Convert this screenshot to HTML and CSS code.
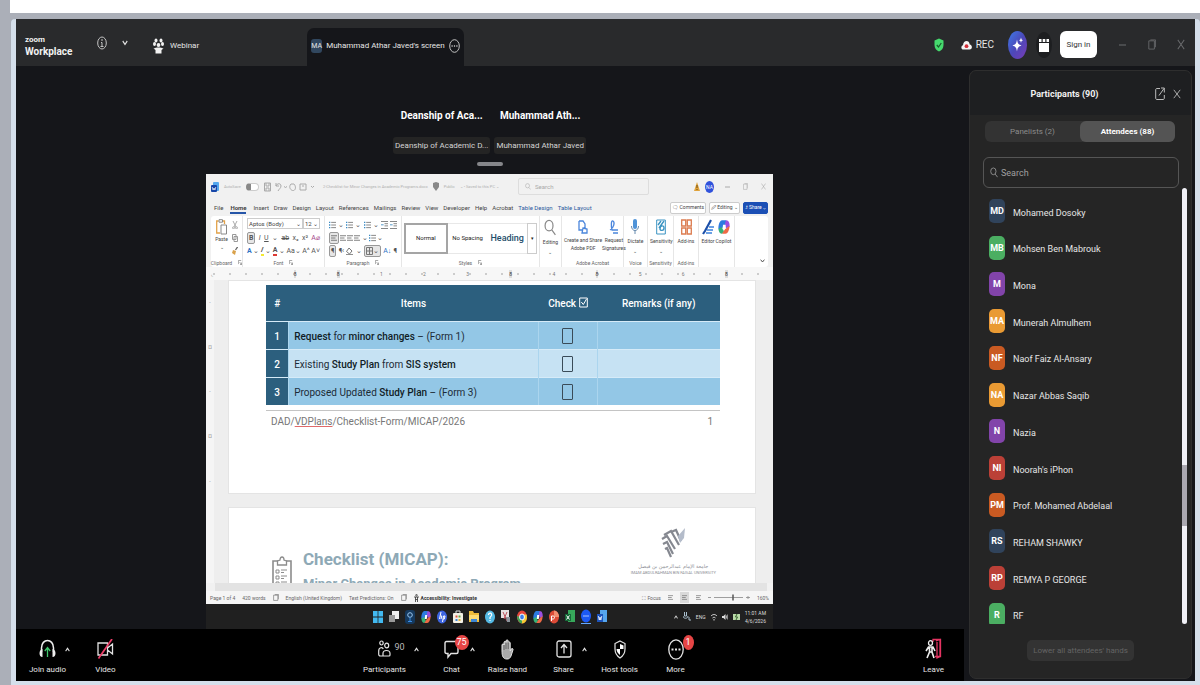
FILE: index.html
```
<!DOCTYPE html>
<html lang="en">
<head>
<meta charset="utf-8">
<title>Zoom Workplace</title>
<link rel="stylesheet" href="styles.css">
</head>
<body>
<svg class="defs" aria-hidden="true">
  <symbol id="up" viewBox="0 0 8 6" preserveAspectRatio="none"><path d="M1 5l3-3.5L7 5" fill="none" stroke="currentColor" stroke-width="1.6"/></symbol>
  <symbol id="down" viewBox="0 0 8 6" preserveAspectRatio="none"><path d="M1 1l3 3.5L7 1" fill="none" stroke="currentColor" stroke-width="1.4"/></symbol>
  <symbol id="cross" viewBox="0 0 10 12" preserveAspectRatio="none"><path d="M1 1l8 10M9 1L1 11" fill="none" stroke="currentColor" stroke-width="1.1"/></symbol>
  <symbol id="box" viewBox="0 0 10 12" preserveAspectRatio="none"><path d="M1 2h7v9H1zM3 1h6.500v8" fill="none" stroke="currentColor"/></symbol>
  <symbol id="search" viewBox="0 0 10 14" preserveAspectRatio="none"><path d="M7.500 5.500a3.300 4.300 0 1 1-6.600 0a3.300 4.300 0 1 1 6.600 0M6.500 9l3 4" fill="none" stroke="currentColor" stroke-width="1"/></symbol>
  <symbol id="lines" viewBox="0 0 8 9"><path d="M0 1.500h8M0 4.500h6M0 7.500h8" stroke="currentColor" fill="none"/></symbol>
  <symbol id="bullets" viewBox="0 0 8 9"><path d="M2.500 1.500H8M2.500 4.500H8M2.500 7.500H8" stroke="#777" fill="none"/><path d="M0 1.500h1.500M0 4.500h1.500M0 7.500h1.500" stroke="#3a8bc4" stroke-width="1.500"/></symbol>
  <symbol id="indent" viewBox="0 0 8 9"><path d="M0 .5h8M4 3h4M4 5.500h4M0 8.500h8" stroke="#777" fill="none"/><path d="M0 4.300h3" stroke="#3a8bc4"/></symbol>
  <symbol id="launch" viewBox="0 0 5 6"><path d="M.5 5V.5H4M2 2.500l2.500 3M4.500 3v2.500H2.500" stroke="#777" stroke-width=".8" fill="none"/></symbol>
  <symbol id="copilot" viewBox="0 0 12 14" preserveAspectRatio="none"><path d="M4 1h4l1.500 3L6 6 3 10 .5 9C0 5 2 1 4 1z" fill="#2c7be0"/><path d="M8 1c3 0 4 3 3.500 6L8 8 7 4z" fill="#9b4fe0"/><path d="M.5 8.500L4 7l2 4-2 2C2 13 .5 11 .5 8.500z" fill="#35b276"/><path d="M11.500 6c0 4-2 7-4 7H4l3-4z" fill="#ef6a45"/><path d="M5 5h2.500L7 9H4.500z" fill="#fff"/></symbol>
</svg>

<div class="topstrip"></div>
<div class="window">
  <header class="titlebar">
    <div class="brand"><span class="brand-small">zoom</span><span class="brand-big">Workplace</span></div>
    <button class="plain info" aria-label="Meeting information"><svg width="10" height="14" viewBox="0 0 10 14" preserveAspectRatio="none" fill="none" stroke="#c4c4c4"><ellipse cx="5" cy="7" rx="4.300" ry="6"/><path d="M5 3v2M4 6.500h1V10M3.500 10.500h3"/></svg></button>
    <button class="plain more-info" aria-label="More information"><svg width="6" height="6"><use href="#down"/></svg></button>
    <div class="webinar">
      <svg width="11" height="16" viewBox="0 0 11 16" fill="#f2f2f2"><ellipse cx="3" cy="2.500" rx="1.500" ry="2"/><ellipse cx="8" cy="2.500" rx="1.500" ry="2"/><ellipse cx="1.500" cy="6" rx="1.500" ry="2"/><ellipse cx="9.500" cy="6" rx="1.500" ry="2"/><circle cx="5.500" cy="7" r="1.900"/><path d="M.5 10.500C3 9 8 9 10.500 10.500L8.500 12v3.500h-6V12z"/></svg>
      <span>Webinar</span>
    </div>
    <div class="screen-tab">
      <span class="mini-avatar">MA</span><span>Muhammad Athar Javed's screen</span>
      <button class="plain" aria-label="Screen options"><svg width="11" height="14" viewBox="0 0 11 14" preserveAspectRatio="none" fill="none" stroke="#c4c4c4"><ellipse cx="5.500" cy="7" rx="4.800" ry="6.300"/><path d="M2.500 7h1.200M4.900 7h1.200M7.300 7h1.200" stroke-width="1.600"/></svg></button>
    </div>
    <div class="title-tools">
      <svg width="10" height="14" viewBox="0 0 10 14"><path d="M5 .5l4.500 2V7c0 3.500-2 5.500-4.500 6.500C2.500 12.500.5 10.500.5 7V2.500z" fill="#45d96d"/><path d="M2.800 7l1.700 2 2.800-4" fill="none" stroke="#185c2c" stroke-width="1.200"/></svg>
      <div class="rec"><svg width="11" height="10" viewBox="0 0 11 10"><path d="M2.500 9.500C-.3 9.500-.2 5.600 2 5.200 2.200.1 8.300-.6 8.700 4.500c3 .3 2.800 5 0 5z" fill="#f5f5f5"/><circle cx="5.500" cy="6.200" r="1.900" fill="#d3303a"/></svg><span>REC</span></div>
      <button class="plain" aria-label="AI Companion"><svg width="19" height="28" viewBox="0 0 19 28"><defs><linearGradient id="ai" x1="0" y1="0" x2="1" y2="1"><stop offset="0" stop-color="#3f7be8"/><stop offset=".5" stop-color="#4b48b9"/><stop offset="1" stop-color="#7a3bb5"/></linearGradient></defs><ellipse cx="9.500" cy="14" rx="9.500" ry="14" fill="url(#ai)"/><path d="M9 8.500c.6 4 1.500 5 4.500 6-3 1-3.900 2-4.500 6-.6-4-1.500-5-4.500-6 3-1 3.900-2 4.500-6zM13 6.500l.6 2 1.400.7-1.400.7-.6 2-.6-2-1.400-.7 1.400-.7z" fill="#fff"/></svg></button>
      <button class="plain cal" aria-label="Calendar"><svg width="10" height="14" viewBox="0 0 10 14" fill="#fff"><rect y="5" width="10" height="9"/><path d="M0 1h2.500v3H0zM3.700 1h2.600v3H3.700zM7.500 1H10v3H7.500z"/></svg></button>
      <button class="sign-in">Sign in</button>
      <div class="win-buttons">
        <button class="plain" aria-label="Minimize"><svg width="8" height="12" viewBox="0 0 8 12"><path d="M0 6h7" stroke="currentColor"/></svg></button>
        <button class="plain" aria-label="Restore"><svg width="8" height="11"><use href="#box"/></svg></button>
        <button class="plain" aria-label="Close"><svg width="8" height="11"><use href="#cross"/></svg></button>
      </div>
    </div>
  </header>

  <div class="content">
    <div class="left">
      <main class="stage">
        <div class="speakers">
          <div class="speaker"><strong>Deanship of Aca...</strong><span>Deanship of Academic D...</span></div>
          <div class="speaker"><strong>Muhammad Ath...</strong><span>Muhammad Athar Javed</span></div>
        </div>
        <div class="grip"></div>

        <section class="share" aria-label="Shared screen">
          <div class="w-title">
            <svg width="8" height="10" viewBox="0 0 8 10"><rect x="2" width="6" height="9" rx="1" fill="#55a8ee"/><rect y="3" width="6" height="7" rx="1" fill="#1746a8"/><path d="M1.200 5l.9 3L3 6l.9 2 .9-3" stroke="#fff" stroke-width=".7" fill="none"/></svg>
            <span class="faint saved">AutoSave</span><span class="switch"></span>
            <svg class="quick" width="50" height="10" viewBox="0 0 50 10" fill="none" stroke="#aaa"><path d="M.5 1h6v8h-6zM2 1v3h3V1M2 9V6h3v3M12 1v3h3M12 4c1-3 5-3 5 0 0 2-2 3-3 5M20 4.500l1.500 1L23 4.500M27 2c-3 3 0 7 2.500 6.500S32 4 30 2h-3M36 2h6v6h-6zM38 4h2M47 4l1.500 1.500L50 4"/></svg>
            <span class="faint doc-name">2-Checklist for Minor Changes in Academic Programs.docx</span>
            <svg width="6" height="9" viewBox="0 0 6 9"><path d="M0 1l3-1 3 1v4L3 9 0 5z" fill="#888"/></svg>
            <span class="faint saved">Public</span><span class="faint saved">⌄ • Saved to this PC ⌄</span>
            <label class="w-search"><svg width="6" height="7"><use href="#search"/></svg><input type="text" placeholder="Search" aria-label="Search document"></label>
            <svg width="6" height="9" viewBox="0 0 6 9"><path d="M3 0l3 9H0z" fill="#e0a33c"/><path d="M3 3v3M3 7v1" stroke="#6b4b12"/></svg>
            <span class="me">NA</span>
            <span class="w-win"><svg width="5" height="8" viewBox="0 0 5 8"><path d="M0 4h5" stroke="currentColor"/></svg><svg width="5" height="7"><use href="#box"/></svg><svg width="5" height="7"><use href="#cross"/></svg></span>
          </div>
          <nav class="w-tabs">
            <a href="#">File</a><a href="#" class="on">Home</a><a href="#">Insert</a><a href="#">Draw</a><a href="#">Design</a><a href="#">Layout</a><a href="#">References</a><a href="#">Mailings</a><a href="#">Review</a><a href="#">View</a><a href="#">Developer</a><a href="#">Help</a><a href="#">Acrobat</a><a href="#" class="blue">Table Design</a><a href="#" class="blue">Table Layout</a>
            <span class="w-actions"><button>🗨 Comments</button><button>🖉 Editing ⌄</button><button class="primary">⮥ Share ⌄</button></span>
          </nav>
          <div class="ribbon">
            <div class="group">
              <div class="tools clip">
                <div class="paste"><svg width="11" height="16" viewBox="0 0 11 16" fill="none"><path d="M2.500 2H.7v12H4M7 2h1.500v3" stroke="#e2a24a" stroke-width="1.300"/><path d="M3 .7h3.500v2.500H3z" stroke="#888"/><path d="M5 6h5.500v9H5z" fill="#fff" stroke="#888"/></svg><span>Paste</span><span>⌄</span></div>
                <div class="col"><svg width="6" height="8" viewBox="0 0 6 8" fill="none" stroke="#aaa"><path d="M1 0l3 6M5 0L2 6"/><circle cx="1.500" cy="6.800" r="1"/><circle cx="4.500" cy="6.800" r="1"/></svg><svg width="6" height="8" viewBox="0 0 6 8" fill="#fff" stroke="#999"><path d="M.5.5h3.500v5H.5zM2 2.500h3.500v5H2z"/></svg><svg width="6" height="8" viewBox="0 0 6 8"><path d="M5.500 0L3.500 3" stroke="#666" stroke-width="1.300"/><path d="M1 3l3 1-1 4-3-2z" fill="#d9a14a"/></svg></div>
              </div>
              <p>Clipboard <svg width="4" height="5"><use href="#launch"/></svg></p>
            </div>
            <div class="group">
              <div class="tools rows">
                <div class="fields"><span class="field wide">Aptos (Body) <i>⌄</i></span><span class="field">12 <i>⌄</i></span></div>
                <div class="row"><b class="pressed">B</b><em>I</em><u>U</u><span>⌄</span><s>ab</s><span>x₂</span><span>x²</span><span class="pink">A⌀</span></div>
                <div class="row"><b class="fx">A</b><span>⌄</span><b class="hl">∕</b><span>⌄</span><b class="fc">A</b><span>⌄</span><span>Aa⌄</span><span>A^</span><span>A˅</span></div>
              </div>
              <p>Font <svg width="4" height="5"><use href="#launch"/></svg></p>
            </div>
            <div class="group">
              <div class="tools rows">
                <div class="row"><svg width="7" height="8"><use href="#bullets"/></svg><span>⌄</span><svg width="7" height="8"><use href="#bullets"/></svg><span>⌄</span><svg width="7" height="8"><use href="#bullets"/></svg><span>⌄</span><svg width="7" height="8"><use href="#indent"/></svg><svg width="7" height="8"><use href="#indent"/></svg></div>
                <div class="row short"><span class="pressed"><svg width="6" height="8"><use href="#lines"/></svg></span><svg width="6" height="8"><use href="#lines"/></svg><svg width="6" height="8"><use href="#lines"/></svg><svg width="6" height="8"><use href="#lines"/></svg><span>⌄</span><svg width="7" height="8"><use href="#bullets"/></svg><span>⌄</span></div>
                <div class="row"><span class="pressed">¶</span><span>¶‹</span><svg width="7" height="8" viewBox="0 0 7 8" fill="none" stroke="#777"><path d="M3 1L.5 4.500 3.500 7 6 4zM0 7.700h7"/></svg><span>⌄</span><span class="pressed"><svg width="7" height="8" viewBox="0 0 7 8" fill="none" stroke="#777"><path d="M.5.500h6v7h-6zM3.500.500v7M.5 4h6"/></svg>⌄</span><span class="bluet">A↓</span><b>¶</b></div>
              </div>
              <p>Paragraph <svg width="4" height="5"><use href="#launch"/></svg></p>
            </div>
            <div class="group">
              <div class="tools styles"><span class="style sel">Normal</span><span class="style">No Spacing</span><span class="style head">Heading</span><span class="style arrow">▾</span></div>
              <p>Styles <svg width="4" height="5"><use href="#launch"/></svg></p>
            </div>
            <div class="group">
              <div class="tools big"><div><svg class="glass" width="12" height="17"><use href="#search"/></svg><span>Editing</span><span>⌄</span></div></div>
            </div>
            <div class="group">
              <div class="tools big"><div><svg width="10" height="15" viewBox="0 0 10 15" fill="none" stroke="#4b86dc"><path d="M1 2h4l2 3v4M1 2v9h3M5 9l4 1v4H4z" stroke-width="1.300"/></svg><span>Create and Share<br>Adobe PDF</span></div><div><svg width="10" height="15" viewBox="0 0 10 15" fill="none" stroke="#4b86dc"><path d="M1 11c4-2 5-8 3-9s-2 5-1 9h6M4 14h5" stroke-width="1.300"/></svg><span>Request<br>Signatures</span></div></div>
              <p>Adobe Acrobat</p>
            </div>
            <div class="group">
              <div class="tools big"><div><svg width="8" height="16" viewBox="0 0 8 16"><rect x="2" width="4" height="10" rx="2" fill="#4e93d8"/><path d="M.5 7c0 6 7 6 7 0M4 11.500V15" fill="none" stroke="#6589ad"/></svg><span>Dictate</span><span>⌄</span></div></div>
              <p>Voice</p>
            </div>
            <div class="group">
              <div class="tools big"><div><svg width="10" height="16" viewBox="0 0 10 16" fill="none" stroke="#3a93c2"><path d="M.7 1h8.600v14H.7z"/><path d="M2 6l3-4M3 9l5-7M4 10c0-4 4-4 4-1s-4 3-4 1" stroke-width="1.400"/></svg><span>Sensitivity</span><span>⌄</span></div></div>
              <p>Sensitivity</p>
            </div>
            <div class="group">
              <div class="tools big"><div><svg width="11" height="16" viewBox="0 0 11 16" fill="none" stroke="#dc7c50" stroke-width="1.300"><path d="M.7 1h4v6h-4zM6.300 1h4v6h-4zM.7 9h4v6h-4zM6.300 9h4v6h-4z"/></svg><span>Add-ins</span></div></div>
              <p>Add-ins</p>
            </div>
            <div class="group">
              <div class="tools big"><div><svg width="12" height="16" viewBox="0 0 12 16" fill="none"><path d="M9 1L3 12l-2 3" stroke="#1c4fa8" stroke-width="2.200"/><path d="M7 8h5M5 11h6M4 14h6" stroke="#3d83dd" stroke-width="1.500"/></svg><span>Editor</span></div><div><svg width="12" height="16"><use href="#copilot"/></svg><span>Copilot</span></div></div>
            </div>
            <div class="group last"><svg width="5" height="4"><use href="#down"/></svg></div>
          </div>
          <div class="ruler"><span>⌞</span><span></span><span class="mark">8</span><span class="mark">8</span><span>1</span><span>2</span><span>3</span><span class="mark">8</span><span>4</span><span class="mark">8</span><span>5</span><span>6</span><span class="mark">8</span><span></span></div>
          <div class="doc">
            <div class="vruler"><span>-</span><span>¤</span><span>-</span><span>¤</span><span>-</span></div>
            <div class="pages">
              <article class="page first">
                <table>
                  <colgroup><col class="c-num"><col class="c-item"><col class="c-check"><col></colgroup>
                  <thead><tr><th>#</th><th>Items</th><th>Check <svg width="9" height="11" viewBox="0 0 9 11" fill="none" stroke="#fff"><path d="M.7 1h7.600v9H.7zM2.300 5l2 2.500L7.500 2"/></svg></th><th>Remarks (if any)</th></tr></thead>
                  <tbody>
                    <tr><th>1</th><td><b>Request</b> for <b>minor changes</b> – (Form 1)</td><td class="ctr"><input type="checkbox" aria-label="Request for minor changes"></td><td></td></tr>
                    <tr><th>2</th><td>Existing <b>Study Plan</b> from <b>SIS system</b></td><td class="ctr"><input type="checkbox" aria-label="Existing Study Plan"></td><td></td></tr>
                    <tr><th>3</th><td>Proposed Updated <b>Study Plan</b> – (Form 3)</td><td class="ctr"><input type="checkbox" aria-label="Proposed Updated Study Plan"></td><td></td></tr>
                  </tbody>
                </table>
                <footer class="page-foot"><span>DAD/<u>VDPlans</u>/Checklist-Form/MICAP/2026</span><span>1</span></footer>
              </article>
              <article class="page second">
                <svg class="board" width="20" height="34" viewBox="0 0 20 34" fill="none" stroke="#8c8c8c"><path d="M6 5H1v29M14 5h5v29" stroke-width="1.600"/><path d="M5.500 9V5l2.500-1c0-4 4-4 4 0l2.500 1v4z" stroke-width="1.300"/><path d="M4 14h3v3H4zM4 20h3v3H4zM4 26h3v3H4zM9 14h6M9 16.500h3M9 20h6M9 22.500h3M9 26h6M9 28.500h3"/></svg>
                <div class="headings"><h1>Checklist (MICAP):</h1><h2>Minor Changes in Academic Program</h2></div>
                <div class="uni">
                  <svg width="25" height="30" viewBox="0 0 25 30" fill="none" stroke="#858890"><path d="M1 11l5-3 8 13M2 16l4-2 6 12M4 21l2-1 4 9M3 7l7-4 8 14M10 4l5-2 5 11" stroke-width="2.200"/><path d="M24 0l-1 10-4 5-2-7z" fill="#b4bcca" stroke="none"/></svg>
                  <span class="ar" lang="ar" dir="rtl">جامعة الإمام عبدالرحمن بن فيصل</span>
                  <span class="en">IMAM ABDULRAHMAN BIN FAISAL UNIVERSITY</span>
                </div>
              </article>
            </div>
          </div>
          <div class="hscroll"></div>
          <div class="status">
            <span>Page 1 of 4</span><span>420 words</span><svg width="6" height="7"><use href="#box"/></svg><span>English (United Kingdom)</span><span>Text Predictions: On</span><svg width="6" height="7"><use href="#box"/></svg><svg width="5" height="8" viewBox="0 0 5 8" fill="none" stroke="#333" stroke-width=".8"><circle cx="2.500" cy="1.200" r=".8"/><path d="M0 3h5M1.500 3v5M3.500 3v5M1.500 5.500h2"/></svg><b>Accessibility: Investigate</b>
            <span class="right">⛶ Focus</span><svg width="5" height="7"><use href="#lines"/></svg><span class="view-on"><svg width="5" height="7"><use href="#lines"/></svg></span><svg width="5" height="7"><use href="#lines"/></svg><svg width="42" height="7" viewBox="0 0 42 7"><path d="M0 3.500h3M6 3.500h29M38 3.500h4M40 2v3" stroke="#888" stroke-width=".8"/><path d="M25 .5v6" stroke="#555" stroke-width="1.500"/></svg><span>160%</span>
          </div>
          <div class="taskbar">
            <div class="apps">
              <svg width="10" height="14" viewBox="0 0 10 14"><path d="M0 1h4.600v5.600H0zM5.400 1H10v5.600H5.400zM0 7.400h4.600V13H0zM5.400 7.400H10V13H5.400z" fill="#42b9f0"/></svg>
              <svg width="10" height="14" viewBox="0 0 10 14"><rect x="3" y="1" width="7" height="8" fill="#eee"/><rect y="5" width="6" height="7" fill="#999"/></svg>
              <svg width="10" height="14" viewBox="0 0 10 14"><rect width="10" height="14" rx="3" fill="#15395e"/><circle cx="5" cy="5" r="2.300" fill="none" stroke="#9cc8ef"/><path d="M5 7.500V11M3 11.500h4" stroke="#3a8be2"/></svg>
              <svg width="10" height="14"><use href="#copilot"/></svg>
              <svg width="10" height="14" viewBox="0 0 10 14"><ellipse cx="5" cy="7" rx="5" ry="6.500" fill="#3c64e0"/><path d="M4 2L2.500 9M3.500 6h1.300L4 9M6.500 6L5.500 12M6.500 6H8l-.7 3H6" stroke="#fff" fill="none"/></svg>
              <svg width="10" height="14" viewBox="0 0 10 14"><rect y="3" width="10" height="10" rx="1" fill="#f4f1e6"/><path d="M3 3V1h4v2" stroke="#ddd" fill="none"/><path d="M2.500 5.500h2v2h-2z" fill="#e0533d"/><path d="M5.500 5.500h2v2h-2z" fill="#67a845"/><path d="M2.500 9h2v2h-2z" fill="#3c82d8"/><path d="M5.500 9h2v2h-2z" fill="#e7b52f"/></svg>
              <svg width="10" height="14" viewBox="0 0 10 14"><path d="M0 1h4l1 2h5v9H0z" fill="#efbc3a"/><path d="M0 5h10v5H0z" fill="#ffdc73"/><path d="M2 9h6v3H2z" fill="#3c86d5"/></svg>
              <svg width="10" height="14" viewBox="0 0 10 14"><ellipse cx="5" cy="7" rx="5" ry="6.500" fill="#54b9e3"/><path d="M3.500 5c0-3 4-2 3 .5L5 7.500V9M5 10v1" stroke="#fff" stroke-width="1.200" fill="none"/></svg>
              <svg width="10" height="14" viewBox="0 0 10 14"><rect width="8" height="8" fill="#e8e2e2"/><path d="M2 2l4 9M6 2L3 9" stroke="#bd515b"/><path d="M5 7h4v5H6z" fill="#8c949c"/></svg>
              <svg width="10" height="14" viewBox="0 0 10 14"><ellipse cx="5" cy="7" rx="5" ry="6.500" fill="#e9463b"/><path d="M0 6c0 4 2 7 5 7.500L6 8z" fill="#42a354"/><path d="M5 13.500c4 0 6-5 4.500-9H5z" fill="#f5c933"/><ellipse cx="5" cy="7" rx="2.400" ry="3" fill="#3d7fe8" stroke="#fff"/></svg>
              <svg width="10" height="14"><use href="#copilot"/></svg>
              <svg width="10" height="14" viewBox="0 0 10 14"><ellipse cx="5" cy="7" rx="5" ry="6.500" fill="#dc4a36"/><path d="M5 .5c3 0 5 3 5 6.500H5z" fill="#f28d70"/><path d="M2.500 11V6H4c2 0 2 3 0 3H2.500" stroke="#fff" fill="none"/></svg>
              <svg width="10" height="14" viewBox="0 0 10 14"><path d="M3 0h7v12H3z" fill="#37a85a"/><path d="M0 4h6v7H0z" fill="#176a39"/><path d="M1.500 5.500l3 4M4.500 5.500l-3 4" stroke="#fff"/></svg>
              <span class="app-on"><svg width="10" height="14" viewBox="0 0 10 14"><ellipse cx="5" cy="7" rx="5" ry="6.500" fill="#1c59f5"/><path d="M2 7h6" stroke="#a9c3ff"/></svg></span>
              <svg width="10" height="14" viewBox="0 0 10 14"><path d="M3 0h7v12H3z" fill="#56a6ee"/><path d="M0 4h6v8H0z" fill="#1d53ba"/><path d="M1.300 6l1 4L3 7l.8 3 1-4" stroke="#fff" stroke-width=".8" fill="none"/></svg>
            </div>
            <div class="tray"><svg width="4" height="4"><use href="#up"/></svg><svg width="8" height="9" viewBox="0 0 8 9" fill="none" stroke="#aac0cf"><path d="M1.500 0v4h2V0M0 4c0 3 5 3 5 0M6 5v3h2"/></svg><span>ENG</span><svg width="6" height="8" viewBox="0 0 6 8" fill="none" stroke="#ddd"><path d="M0 3c2-2 4-2 6 0M1.500 5c1-1 2-1 3 0M3 6v1.500"/></svg><svg width="6" height="8" viewBox="0 0 6 8"><path d="M0 3h1.500L3.500 1v6l-2-2H0z" fill="#ddd"/><path d="M4.500 2.500v3M5.700 1.500v5" stroke="#ddd" stroke-width=".7"/></svg><svg width="7" height="8" viewBox="0 0 7 8"><rect y="1" width="7" height="6" fill="#b8d9a8"/><path d="M4 1L2.500 4H4.500L3 7" stroke="#35622a" fill="none"/></svg><span class="clock">11:01 AM<br>4/6/2026</span></div>
          </div>
        </section>
      </main>

      <footer class="controls">
        <div class="side">
          <button class="tool"><svg width="17" height="20" viewBox="0 0 17 20" fill="none"><path d="M2.500 13V9c0-10 12-10 12 0v4" stroke="#eee" stroke-width="1.500"/><path d="M3.500 10v8C-.5 18-.5 10.500 3.500 10zM13.500 10v8c4 0 4-7.500 0-8z" fill="#eee"/><path d="M8.500 18V9M5.800 12L8.500 8.500l2.700 3.500" stroke="#3fc66c" stroke-width="1.300"/></svg><span>Join audio</span></button>
          <button class="caret near" aria-label="Audio options"><svg width="5" height="5"><use href="#up"/></svg></button>
          <button class="tool video"><svg width="17" height="20" viewBox="0 0 17 20" fill="none"><path d="M1 4h9.500v12H1zM10.500 9l5-4v10l-5-4" stroke="#e4e4e4" stroke-width="1.300"/><path d="M15 0L1.500 19.500" stroke="#ef3f6a" stroke-width="1.700"/></svg><span>Video</span></button>
        </div>
        <div class="middle">
          <button class="tool parts"><svg width="13" height="18" viewBox="0 0 13 18" fill="none" stroke="#e4e4e4" stroke-width="1.200"><ellipse cx="3.500" cy="3" rx="1.700" ry="2"/><ellipse cx="8.700" cy="5.500" rx="2" ry="2.300"/><path d="M4.500 16H2.500C1 16 .7 15 .7 14v-3c0-4 4-4 4.500-2M5 16v-2.500c0-4 7-4 7 0V15c0 .7-.3 1-1 1z"/></svg><i class="count">90</i><span>Participants</span></button>
          <button class="caret apart" aria-label="Participant options"><svg width="5" height="5"><use href="#up"/></svg></button>
          <button class="tool"><svg width="15" height="20" viewBox="0 0 15 20" fill="none" stroke="#e4e4e4" stroke-width="1.400"><path d="M2.500 2.500h10c1 0 1.500.7 1.500 1.500v9c0 1-.5 1.500-1.500 1.500H7L4 18v-3.500H2.500C1.500 14.500 1 14 1 13V4c0-.8.5-1.500 1.500-1.500z"/></svg><i class="badge">75</i><span>Chat</span></button>
          <button class="caret" aria-label="Chat options"><svg width="5" height="5"><use href="#up"/></svg></button>
          <button class="tool"><svg width="13" height="21" viewBox="0 0 13 21" fill="#aaa" stroke="#e4e4e4"><path d="M1 12V6c0-1.500 2-1.500 2 0V3.500c0-1.500 2-1.500 2 0V2c0-1.500 2.200-1.500 2.200 0v2c0-1.500 2-1.500 2 0v8l1-2c.8-1 2.300-.5 1.800.8L10 17c-1 2.300-2 3-4 3-4 0-5-3-5-8z"/><path d="M3 6v5M5 3.500V10M7.200 3v7" stroke="#333" stroke-width=".6"/></svg><span>Raise hand</span></button>
          <button class="tool"><svg width="16" height="18" viewBox="0 0 16 18" fill="none" stroke="#e4e4e4" stroke-width="1.300"><rect x="1" y="1" width="14" height="16" rx="2"/><path d="M8 13.500V5M5 8l3-3.500L11 8"/></svg><span>Share</span></button>
          <button class="caret" aria-label="Share options"><svg width="5" height="5"><use href="#up"/></svg></button>
          <button class="tool"><svg width="12" height="19" viewBox="0 0 12 19"><path d="M6 1l5 2.500V9c0 4.500-2 7-5 9-3-2-5-4.500-5-9V3.500z" fill="none" stroke="#e4e4e4" stroke-width="1.200"/><path d="M6 4v5h3.500V5.500zM6 9v6C4 13.500 2.700 12 2.500 9z" fill="#fff"/></svg><span>Host tools</span></button>
          <button class="tool"><svg width="16" height="21" viewBox="0 0 16 21" fill="none" stroke="#e4e4e4"><ellipse cx="8" cy="10.500" rx="7.200" ry="9.700" stroke-width="1.300"/><path d="M3.500 10.500h2M7 10.500h2M10.500 10.500h2" stroke-width="2"/></svg><i class="badge one">1</i><span>More</span></button>
        </div>
        <button class="tool leave"><svg width="17" height="22" viewBox="0 0 17 22" fill="none"><path d="M8 4V1.500h7.500v17H10M11 3l4-1.500v17l-3 1.500V4" stroke="#e53462" stroke-width="1.300"/><ellipse cx="5.500" cy="5" rx="2" ry="2.300" stroke="#eee" stroke-width="1.300"/><path d="M3 9h5l2 4M3.500 9L1 13M4.500 9v5L2 20M7 9v5l2 6M4.500 14H7" stroke="#eee" stroke-width="1.600"/></svg><span>Leave</span></button>
      </footer>
    </div>

    <aside class="panel">
      <header class="panel-head"><h2>Participants (90)</h2><span class="panel-icons"><button class="plain" aria-label="Pop out"><svg width="10" height="14" viewBox="0 0 10 14" fill="none" stroke="#bbb"><path d="M5 1.500H2C1 1.500.7 2 .7 3v8c0 1 .3 1.500 1.300 1.500h6c1 0 1.300-.5 1.300-1.500V8M6 1h3.300v4.500M9 1.500L4 8.500"/></svg></button><button class="plain" aria-label="Close panel"><svg width="8" height="10"><use href="#cross"/></svg></button></span></header>
      <div class="switcher"><button>Panelists (2)</button><button class="active">Attendees (88)</button></div>
      <label class="find"><svg width="8" height="11"><use href="#search"/></svg><input type="text" placeholder="Search" aria-label="Search participants"></label>
      <div class="list">
        <ul>
          <li><span class="av navy">MD</span><span>Mohamed Dosoky</span></li>
          <li><span class="av green">MB</span><span>Mohsen Ben Mabrouk</span></li>
          <li><span class="av purple">M</span><span>Mona</span></li>
          <li><span class="av amber">MA</span><span>Munerah Almulhem</span></li>
          <li><span class="av orange">NF</span><span>Naof Faiz Al-Ansary</span></li>
          <li><span class="av amber">NA</span><span>Nazar Abbas Saqib</span></li>
          <li><span class="av purple">N</span><span>Nazia</span></li>
          <li><span class="av red">NI</span><span>Noorah's iPhon</span></li>
          <li><span class="av orange">PM</span><span>Prof. Mohamed Abdelaal</span></li>
          <li><span class="av navy">RS</span><span>REHAM SHAWKY</span></li>
          <li><span class="av red">RP</span><span>REMYA P GEORGE</span></li>
          <li><span class="av green">R</span><span>RF</span></li>
        </ul>
        <div class="track"><div class="thumb"></div></div>
      </div>
      <button class="lower" disabled>Lower all attendees' hands</button>
    </aside>
  </div>
</div>
</body>
</html>
```
FILE: styles.css
```
* { box-sizing: border-box; }
body {
  margin: 0; height: 100vh; display: flex; flex-direction: column;
  background: #abafb8; padding-left: 10px; overflow: hidden;
  font-family: Roboto, "Open Sans", sans-serif;
  font-size: 8px; line-height: 12px; color: #e6e6e6;
}
button, input { font: inherit; color: inherit; }
button { margin: 0; padding: 0; border: 0; background: none; }
svg { display: block; flex: none; }
h1, h2, p, ul { margin: 0; padding: 0; }
i { font-style: normal; }
.defs { position: absolute; width: 0; height: 0; }
.plain { display: flex; align-items: center; }

.topstrip { height: 13px; background: #fff; flex: none; }
.window {
  flex: 1; min-height: 0; display: flex; flex-direction: column; margin: 6px 0 0 1px;
  border: 5px solid #d5dfeb; border-top: 0; border-bottom-width: 4px;
  border-radius: 4px 4px 0 0; background: #15161a;
}

/* title bar */
.titlebar { height: 47px; display: flex; align-items: center; background: #292a2c; padding: 0 10px 0 9px; flex: none; }
.brand { width: 72px; display: flex; flex-direction: column; font-weight: bold; color: #f2f2f2; padding-top: 7px; }
.brand-small { font-size: 8px; line-height: 11px; }
.brand-big { font-size: 10px; line-height: 14px; }
.more-info { margin-left: 15px; }
.webinar { display: flex; align-items: center; gap: 6px; margin-left: 25px; padding-top: 6px; }
.screen-tab {
  display: flex; align-items: center; gap: 4px; align-self: flex-end; height: 38px;
  margin-left: 108px; padding: 0 4px 2px; background: #15161a; border-radius: 7px 7px 0 0; white-space: nowrap;
}
.mini-avatar { width: 11px; height: 14px; line-height: 14px; border-radius: 3px; background: #31475f; font-size: 7px; display: flex; justify-content: center; }
.title-tools { margin-left: auto; display: flex; align-items: center; gap: 12px; padding-top: 4px; }
.rec { display: flex; align-items: center; gap: 4px; font-size: 10px; margin: 0 2px 0 5px; }
.cal { background: #1d1e20; border-radius: 50%; height: 26px; padding: 0 3px; margin-left: -3px; }
.sign-in { background: #fff; color: #333; border-radius: 6px; width: 37px; height: 27px; margin-left: -4px; }
.win-buttons { display: flex; gap: 21px; color: #6b6c6e; margin-left: 10px; }

.content { flex: 1; display: flex; min-height: 0; }
.left { flex: 1; min-width: 0; display: flex; flex-direction: column; }
.stage { flex: 1; min-height: 0; display: flex; flex-direction: column; padding: 43px 191px 0 190px; }

/* speakers */
.speakers { display: flex; justify-content: center; gap: 4px; }
.speaker { display: flex; flex-direction: column; align-items: center; gap: 14px; }
.speaker strong { font-size: 10px; line-height: 14px; color: #fff; }
.speaker span { font-size: 8px; line-height: 17px; background: #242424; border-radius: 3px; padding: 0 2px; color: #d5d5d5; }
.grip { width: 26px; height: 4px; border-radius: 2px; background: #85868a; margin: 8px auto 8px; flex: none; }

/* shared screen */
.share { flex: 1; min-height: 0; display: flex; flex-direction: column; background: #f1f1f1; color: #444; font-size: 6px; line-height: 8px; white-space: nowrap; }
.w-title { height: 25px; display: flex; align-items: center; gap: 5px; padding: 0 7px 0 5px; flex: none; }
.faint { color: #b0b0b0; }
.doc-name { margin-left: 4px; font-size: 4px; }
.saved { font-size: 4px; }
.switch { width: 13px; height: 8px; border-radius: 4px; background: #fff; border: 1px solid #ccc; border-left: 5px solid #888; flex: none; }
.w-search { display: flex; align-items: center; gap: 4px; width: 131px; height: 17px; border: 1px solid #ddd; border-radius: 2px; padding: 0 6px; color: #aaa; margin-left: auto; margin-right: 40px; flex: none; }
.w-search input { flex: 1; min-width: 0; width: 0; border: 0; padding: 0; background: none; }
.w-search input::placeholder, .find input::placeholder { color: inherit; opacity: 1; }
.me { width: 9px; height: 12px; border-radius: 50%; background: #3052dc; color: #fff; font-size: 5px; line-height: 12px; text-align: center; }
.w-win { display: flex; gap: 13px; color: #aaa; margin-left: 6px; }
.w-tabs { height: 17px; display: flex; align-items: center; gap: 5px; padding: 0 5px 0 8px; flex: none; }
.w-tabs a { color: #444; text-decoration: none; line-height: 9px; }
.w-tabs a.on { font-weight: bold; box-shadow: 0 2px #2656a8; margin: 0 2px; }
.w-tabs a.blue { color: #2c5aa0; }
.w-actions { margin-left: auto; display: flex; gap: 3px; }
.w-actions button { height: 12px; border: 1px solid #ccc; border-radius: 2px; background: #fff; padding: 0 1px; font-size: 5px; line-height: 9px; }
.w-actions .primary { background: #1b4fb5; border-color: #1b4fb5; color: #fff; }

.ribbon { height: 51px; margin: 0 5px; border-radius: 3px; background: #fff; flex: none; display: grid; grid-template-columns: 32fr 82fr 77fr 138fr 22fr 62fr 24fr 26fr 25fr 36fr 33fr; }
.group { min-width: 0; display: flex; flex-direction: column; border-right: 1px solid #e6e6e6; padding: 2px 2px 0; font-size: 6px; }
.group.last { border: 0; align-items: flex-end; justify-content: flex-end; padding: 0 3px 4px; }
.group p { height: 9px; display: flex; align-items: center; justify-content: center; gap: 6px; font-size: 5px; color: #666; }
.tools { height: 40px; }
.clip { display: flex; justify-content: center; gap: 4px; }
.paste { display: flex; flex-direction: column; align-items: center; padding-top: 1px; font-size: 5px; }
.col { display: flex; flex-direction: column; justify-content: space-around; }
.rows { display: grid; grid-template-rows: repeat(3, 1fr); padding: 0 2px; }
.fields { display: flex; }
.field { height: 11px; border: 1px solid #ccc; padding: 1px 1px 0; display: flex; justify-content: space-between; flex: 1; }
.field.wide { flex: 4; }
.row { display: flex; align-items: center; justify-content: space-between; font-size: 7px; color: #555; }
.row.short { padding-right: 14px; }
.pressed { border: 1px solid #999; border-radius: 2px; background: #e6e6e6; padding: 1px; display: flex; }
.fx, .bluet { color: #2d72c4; }
.hl { border-bottom: 2px solid #f3e931; }
.fc { border-bottom: 2px solid #dd3b34; }
.pink { color: #a5478c; }
.styles { display: flex; align-items: center; font-size: 6px; color: #222; }
.style { height: 31px; flex: 40; display: flex; align-items: center; justify-content: center; border: 1px solid #e8e8e8; border-width: 1px 0; min-width: 0; }
.style.sel { border: 2px solid #a5a5a5; }
.style.head { font-size: 9px; font-weight: 500; color: #1f4e6b; }
.style.arrow { flex: 8; border: 1px solid #ccc; font-size: 5px; }
.glass { color: #888; }
.big { display: flex; justify-content: space-around; font-size: 5px; line-height: 8px; text-align: center; }
.big div { display: flex; flex-direction: column; align-items: center; gap: 2px; padding-top: 1px; }

.ruler { height: 13px; display: flex; justify-content: space-between; align-items: center; padding: 0 5px; font-size: 5px; color: #777; background: radial-gradient(circle, #ccc 0 1px, transparent 1px) 0 50% / 16px 12px repeat-x, #f7f7f7; flex: none; }
.mark { color: #333; background: #ddd; }
.doc { flex: 1; min-height: 0; display: flex; background: #eee; overflow: hidden; }
.vruler { width: 8px; display: flex; flex-direction: column; justify-content: space-around; align-items: center; color: #888; background: #f5f5f5; font-size: 5px; padding-bottom: 80px; }
.pages { flex: 1; min-width: 0; display: flex; flex-direction: column; gap: 15px; padding: 1px 18px 0 15px; }
.page { background: #fff; color: #222; outline: 1px solid #e4e4e4; }
.first { height: 212px; padding: 4px 35px 0 37px; flex: none; }
table { width: 100%; table-layout: fixed; border-collapse: collapse; font-size: 10px; line-height: 16px; }
.c-num { width: 5%; } .c-item { width: 55%; } .c-check { width: 13%; }
th { background: #2c5f7e; color: #fff; padding: 3px 0 0; font-weight: 500; }
thead th { height: 36px; }
thead svg { display: inline-block; vertical-align: -1px; }
tbody th, td { height: 28px; border-top: 1px solid #d6ebf8; }
td { background: #93c7e6; padding: 4px 5px 0; border-left: 1px solid #abd5ee; color: #1c2b36; }
td b { color: #111d26; font-weight: 500; }
tr:nth-child(2) td { background: #c6e2f3; }
td.ctr { text-align: center; padding-top: 2px; }
.ctr input { appearance: none; width: 11px; height: 16px; margin: 0; border: 1px solid #3a4b58; border-radius: 1px; vertical-align: middle; }
.page-foot { display: flex; justify-content: space-between; border-top: 1px solid #c4c4c4; margin-top: 5px; padding: 2px 7px 0 5px; font-size: 10px; line-height: 17px; color: #777; }
.page-foot u { text-decoration-color: #e06a6a; }
.second { flex: 1; min-height: 0; overflow: hidden; display: flex; padding: 0 39px 0 43px; }
.board { margin-top: 48px; }
.headings { margin-left: 11px; padding-top: 38px; }
h1 { font-size: 17px; line-height: 26px; color: #8ea9b6; }
.headings h2 { font-size: 13px; line-height: 18px; padding-top: 3px; color: #8ea9b6; }
.uni { margin-left: auto; padding-top: 20px; display: flex; flex-direction: column; align-items: center; color: #8d8f96; }
.ar { font-family: "DejaVu Sans", sans-serif; font-size: 5px; line-height: 8px; padding-top: 4px; }
.en { font-size: 4px; line-height: 6px; }
.hscroll { height: 8px; margin: 0 6px 0 9px; background: #e3e3e3; flex: none; }
.status { height: 13px; background: #f5f5f5; display: flex; align-items: center; gap: 7px; padding: 0 4px; font-size: 5px; color: #666; flex: none; }
.status b { color: #333; margin-left: -5px; }
.right { margin-left: auto; }
.view-on { background: #d9d9d9; padding: 2px; }
.taskbar { height: 25px; background: #202020; color: #ddd; display: grid; grid-template-columns: 1fr auto 1fr; align-items: center; padding: 0 7px; flex: none; }
.apps { grid-column: 2; display: flex; gap: 6px; align-items: center; }
.app-on { border-bottom: 1px solid #65a8ff; }
.tray { display: flex; align-items: center; justify-content: flex-end; gap: 5px; font-size: 5px; line-height: 8px; }
.clock { text-align: right; }

/* control bar */
.controls { height: 52px; background: #000; display: flex; justify-content: space-between; padding: 0 2px 0 3px; flex: none; }
.side, .middle { display: flex; }
.middle { margin-left: 21px; }
.tool { position: relative; width: 57px; display: grid; grid-template-rows: 30px 12px; align-content: end; padding-bottom: 5px; justify-items: center; align-items: center; white-space: nowrap; }
.middle .tool { width: 56px; }
.video { margin-left: 3px; }
.caret { width: 14px; margin-left: -14px; position: relative; display: flex; justify-content: center; padding-top: 18px; }
.caret.near { margin-left: -16px; }
.caret.apart { margin-left: -3px; }
.count { position: absolute; left: 38px; top: 12px; color: #bbb; font-size: 9px; }
.badge { position: absolute; left: 31px; top: 6px; width: 14px; height: 15px; line-height: 15px; border-radius: 50%; background: #e64545; color: #fff; font-size: 9px; }
.badge.one { left: 35px; width: 11px; }

/* participants */
.panel { width: 223px; margin: 4px 3px 2px 5px; background: #252525; border: 1px solid #2e2e2e; border-radius: 7px; display: flex; flex-direction: column; }
.panel-head { height: 44px; background: #1e1f21; border-radius: 7px 7px 0 0; display: grid; grid-template-columns: 1fr auto 1fr; align-items: center; padding: 2px 10px 0 0; flex: none; }
.panel-head h2 { grid-column: 2; font-size: 9px; color: #f2f2f2; margin-right: 22px; }
.panel-icons { display: flex; justify-content: flex-end; align-items: center; gap: 8px; color: #bbb; }
.switcher { display: flex; margin: 6px 16px 0 15px; height: 21px; background: #333; border-radius: 6px; flex: none; }
.switcher button { flex: 1; color: #8c8c8c; border-radius: 6px; }
.switcher .active { background: #545454; color: #fff; font-weight: bold; }
.find { display: flex; align-items: center; gap: 3px; margin: 15px 12px 0 13px; height: 31px; border: 1px solid #555; border-radius: 6px; padding: 0 6px; color: #a0a0a0; font-size: 9px; flex: none; }
.find input { flex: 1; min-width: 0; border: 0; background: none; padding: 0; outline: 0; }
.list { flex: 1; min-height: 0; overflow: hidden; display: grid; grid-template-columns: 1fr 5px; grid-template-rows: 100%; padding-right: 4px; }
.list ul { list-style: none; height: calc(100% + 3px); padding: 11px 0 0 19px; display: flex; flex-direction: column; justify-content: space-between; }
.list li { display: flex; align-items: center; gap: 8px; font-size: 9px; line-height: 14px; height: 24px; flex: none; }
.list li span:last-child { padding-top: 3px; }
.av { width: 16px; height: 24px; line-height: 24px; border-radius: 5px; color: #fff; font-weight: bold; display: flex; justify-content: center; }
.navy { background: #30435b; } .green { background: #4bae62; } .purple { background: #8244aa; }
.amber { background: #e99a33; } .orange { background: #c95a22; } .red { background: #bb4037; }
.track { background: #f0f0f6; border-radius: 3px; padding-top: 277px; }
.thumb { height: 61px; background: #aaa8b0; }
.lower { align-self: center; background: #333; color: #646464; border-radius: 5px; padding: 0 6px; height: 21px; margin: 16px 0 17px; flex: none; font-size: 8px; }
```
